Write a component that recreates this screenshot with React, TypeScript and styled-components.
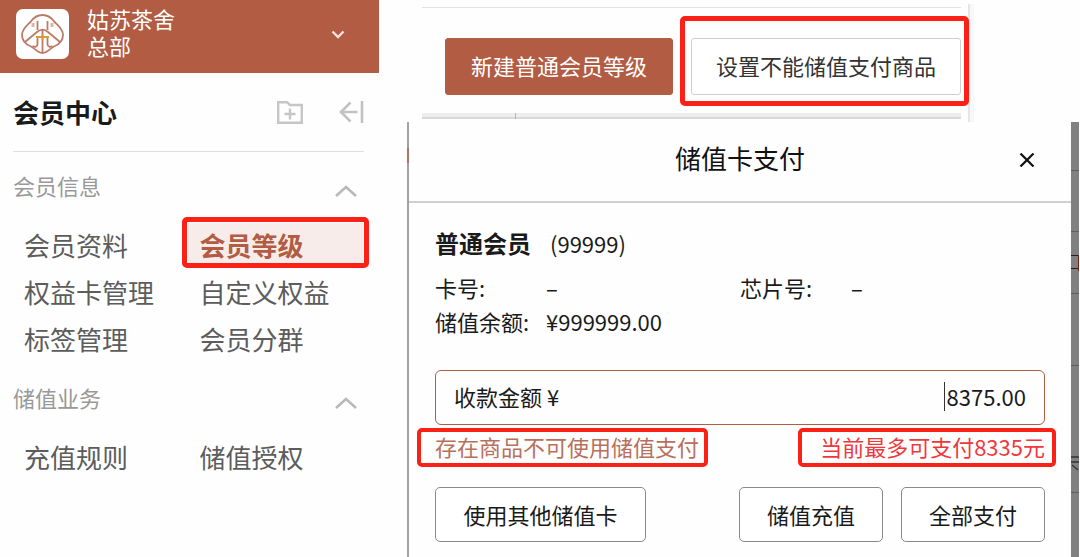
import React from "react";
import styled, { createGlobalStyle, css } from "styled-components";

const brand = "#b15c43";
const alertRed = "#fb2117";

const GlobalStyle = createGlobalStyle`
  *, *::before, *::after { box-sizing: border-box; }
  body {
    margin: 0;
    background: #fefefe;
    color: #1a1a1a;
    font-family: "Noto Sans CJK SC", sans-serif;
    font-size: 22px;
    line-height: 34px;
  }
  button, input { font: inherit; color: inherit; }
  button { padding: 0; border: 0; background: none; cursor: pointer; white-space: nowrap; }
  svg { display: block; flex: none; }
`;

const Page = styled.div`
  display: grid;
  grid-template-columns: minmax(300px, 379px) 1fr;
  min-height: 100vh;
`;

/* Red frame laid over a part to call attention to it */
const outline = css<{ $inset: string; $thick: number }>`
  position: relative;
  &::after {
    content: "";
    position: absolute;
    inset: ${(p) => p.$inset};
    border: ${(p) => p.$thick}px solid ${alertRed};
    border-radius: 5px;
    pointer-events: none;
  }
`;

const Marked = styled.div<{ $inset: string; $thick: number }>`
  ${outline}
`;

const Sidebar = styled.aside`
  display: flex;
  flex-direction: column;
`;

const StoreBar = styled.header`
  display: flex;
  align-items: center;
  gap: 18px;
  height: 73px;
  padding: 0 34px 5px 16px;
  background: ${brand};
  color: #fff;
`;

const Logo = styled.div`
  width: 53px;
  height: 50px;
  border-radius: 7px;
  background: #fff;
`;

const StoreName = styled.div`
  flex: 1;
  padding-bottom: 5px;
  line-height: 27px;

  span { display: block; }
`;

const IconButton = styled.button`
  display: flex;
  align-items: center;
  justify-content: center;
`;

const SidebarTitle = styled.div`
  display: flex;
  align-items: center;
  gap: 36px;
  height: 79px;
  margin: 0 15px 0 13px;
  border-bottom: 1px solid #dfdfdf;

  h1 {
    flex: 1;
    margin: 0;
    font-size: 26px;
    font-weight: 700;
  }
`;

const SectionHead = styled.button`
  display: flex;
  align-items: center;
  justify-content: space-between;
  width: 100%;
  height: 71px;
  padding: 0 22px 5px 13px;
  color: #999;

  svg { margin-top: 11px; }
`;

const Links = styled.nav`
  display: grid;
  grid-template-columns: 1fr 1fr;
  padding: 0 16px 0 12px;
`;

const activeLink = css`
  ${outline}
  color: ${brand};
  font-weight: 700;
  background: linear-gradient(#f7ecea, #f7ecea) no-repeat 0 0 / 100% 41px;
`;

const NavLink = styled.a<{ $active: boolean; $inset: string; $thick: number }>`
  height: 47px;
  padding-left: 12px;
  font-size: 26px;
  line-height: 44px;
  color: #5c5c5c;
  text-decoration: none;
  white-space: nowrap;
  ${(p) => p.$active && activeLink}
`;

const Main = styled.main`
  display: flex;
  flex-direction: column;
  min-width: 0;
`;

const Toolbar = styled.div`
  align-self: flex-start;
  margin: 4px 0 0 43px;
  padding: 3px 7px 0 0;
  height: 118px;
  border-right: 2px solid #e6e6e6;
  box-shadow: 4px 0 0 #f8f8f8;
`;

const ToolbarRow = styled.div`
  display: flex;
  gap: 18px;
  padding: 30px 0 18px 23px;
  border-top: 1px solid #e2e2e2;
`;

const ToolbarFoot = styled.div`
  height: 6px;
  padding-left: 93px;
  background: #ededed;
  border-bottom: 2px solid #d9d9d9;

  &::before {
    content: "";
    display: block;
    width: 1px;
    height: 6px;
    background: #b5b5b5;
  }
`;

const ToolButton = styled.button<{ $primary?: boolean }>`
  height: 57px;
  padding: 0 ${(p) => (p.$primary ? 25 : 24)}px 3px;
  border: 1px solid ${(p) => (p.$primary ? brand : "#cfcfcf")};
  border-radius: 3px;
  background: ${(p) => (p.$primary ? brand : "#fff")};
  color: ${(p) => (p.$primary ? "#fff" : "#333")};
`;

const Stage = styled.div`
  display: flex;
  flex: 1;
  padding: 0 1px 0 28px;
`;

const LeftEdge = styled.div`
  width: 2px;
  background: linear-gradient(#a3a3a3 26px, #b07560 26px 41px, #a3a3a3 41px);
`;

const RightEdge = styled.div`
  width: 8px;
  background: #808080;
`;

const Dialog = styled.section`
  flex: 1;
  min-width: 0;
`;

const DialogHead = styled.header`
  display: grid;
  grid-template-columns: 1fr auto 1fr;
  align-items: center;
  height: 81px;
  padding: 0 36px 4px;
  border-bottom: 2px solid #d0d0d0;

  h2 {
    grid-column: 2;
    margin: 0;
    padding-bottom: 3px;
    font-size: 26px;
    font-weight: 400;
    color: #111;
  }

  button { justify-self: end; }
`;

const DialogBody = styled.div`
  padding: 22px 26px 15px;
`;

const Member = styled.div`
  display: flex;
  align-items: center;
  gap: 19px;
  margin-bottom: 9px;
  line-height: 36px;

  strong { font-size: 24px; }
`;

const Facts = styled.dl`
  display: grid;
  grid-template-columns: 1fr 1fr;
  margin: 0 0 32px;
`;

const Fact = styled.div`
  display: flex;
  white-space: nowrap;

  dt { width: 111px; }
  dd { margin: 0; }
`;

const AmountField = styled.label`
  display: flex;
  align-items: center;
  justify-content: space-between;
  height: 55px;
  padding: 0 18px 3px;
  border: 1px solid ${brand};
  border-radius: 6px;
`;

const AmountEntry = styled.span`
  display: flex;
  align-items: center;

  &::before {
    content: "";
    width: 1px;
    height: 29px;
    background: #333;
  }

  input {
    width: 81px;
    padding: 0;
    border: 0;
    outline: 0;
    background: none;
    text-align: right;
  }
`;

const Hints = styled.div`
  display: flex;
  align-items: center;
  justify-content: space-between;
  height: 42px;
  margin-bottom: 20px;
  white-space: nowrap;
`;

const Hint = styled(Marked)<{ $color: string }>`
  color: ${(p) => p.$color};
`;

const Actions = styled.footer`
  display: flex;
  gap: 18px;
`;

const ActionButton = styled.button<{ $wide?: boolean }>`
  width: ${(p) => (p.$wide ? 211 : 144)}px;
  height: 55px;
  margin-right: ${(p) => (p.$wide ? "auto" : 0)};
  padding-bottom: 2px;
  border: 1px solid #8a8a8a;
  border-radius: 5px;
  background: #fff;
`;

function LogoMark() {
  return (
    <svg width="53" height="50" viewBox="0 0 53 50" fill="none" stroke="#bd7b67" strokeWidth="1.8">
      <path d="M26.500 6C21 6 17.500 8.500 14.500 13C10.500 17 6 20 6 26C6 32 10 35.500 15 37.500C19 39.500 22 44 26.500 44C31 44 34 39.500 38 37.500C43 35.500 47 32 47 26C47 20 42.500 17 38.500 13C35.500 8.500 32 6 26.500 6Z" />
      <path d="M9 33L21 23C24.500 20 28.500 20 32 23L44 33" />
      <path d="M21.500 12V21M31.500 12V21" />
      <path d="M17 14V18M36 14V18" stroke="#dcb5a8" strokeWidth="3" />
      <path d="M26.500 21V43" />
      <path d="M21.500 29V35C21.500 38 19 38.500 16.500 37M31.500 29V35C31.500 38 34 38.500 36.500 37" />
      <path d="M20 28H33M26.500 25V31" stroke="#d99a3c" />
    </svg>
  );
}

function ChevronUp() {
  return (
    <svg width="22" height="12" viewBox="0 0 22 12" fill="none" stroke="#b9b9b9" strokeWidth="2.600">
      <path d="M1 11L11 2L21 11" />
    </svg>
  );
}

/* Slices of the page behind the dialog that show past its right side */
function BackdropDetail() {
  return (
    <svg width="8" height="435" viewBox="0 0 8 435" fill="none" stroke="#5f5f5f">
      <path d="M0 48.500H8M0 109.500H8M0 171.500H8M0 243.500H8M0 370.500H8" />
      <path d="M0 133.500H7M0 146.500H7" stroke="#222" />
      <path d="M7.500 133V149" stroke="#7a1f14" />
      <path d="M0 335H8M0 340H8M1 343L7 348" stroke="#333" strokeWidth="1.500" />
    </svg>
  );
}

interface Entry {
  label: string;
  active?: boolean;
}

const sections: { title: string; entries: Entry[] }[] = [
  {
    title: "会员信息",
    entries: [
      { label: "会员资料" },
      { label: "会员等级", active: true },
      { label: "权益卡管理" },
      { label: "自定义权益" },
      { label: "标签管理" },
      { label: "会员分群" },
    ],
  },
  {
    title: "储值业务",
    entries: [{ label: "充值规则" }, { label: "储值授权" }],
  },
];

export default function App() {
  return (
    <>
      <GlobalStyle />
      <Page>
        <Sidebar>
          <StoreBar>
            <Logo>
              <LogoMark />
            </Logo>
            <StoreName>
              <span>姑苏茶舍</span>
              <span>总部</span>
            </StoreName>
            <IconButton aria-label="切换门店">
              <svg width="14" height="9" viewBox="0 0 14 9" fill="none" stroke="#f6e4de" strokeWidth="2.400">
                <path d="M1.500 1.500L7 7L12.500 1.500" />
              </svg>
            </IconButton>
          </StoreBar>
          <SidebarTitle>
            <h1>会员中心</h1>
            <IconButton aria-label="新建分组">
              <svg width="26" height="23" viewBox="0 0 26 23" fill="none" stroke="#c6c6c6" strokeWidth="2.400">
                <path d="M1.200 1.200H10L13 4H24.800V21.800H1.200Z" />
                <path d="M13 7.500V18.500M7.500 13H18.500" />
              </svg>
            </IconButton>
            <IconButton aria-label="收起">
              <svg width="25" height="22" viewBox="0 0 25 22" fill="none" stroke="#c2c2c2" strokeWidth="2.600">
                <path d="M11.500 1.500L2 11L11.500 20.500M2 11H18.500M23 0V22" />
              </svg>
            </IconButton>
          </SidebarTitle>
          {sections.map((section) => (
            <div key={section.title}>
              <SectionHead>
                {section.title}
                <ChevronUp />
              </SectionHead>
              <Links aria-label={section.title}>
                {section.entries.map((entry) => (
                  <NavLink
                    key={entry.label}
                    href="#"
                    $active={!!entry.active}
                    $inset="-6px -6px 2px"
                    $thick={5}
                  >
                    {entry.label}
                  </NavLink>
                ))}
              </Links>
            </div>
          ))}
        </Sidebar>

        <Main>
          <Toolbar>
            <ToolbarRow>
              <ToolButton $primary>新建普通会员等级</ToolButton>
              <Marked $inset="-22px -8px -11px -11px" $thick={5}>
                <ToolButton>设置不能储值支付商品</ToolButton>
              </Marked>
            </ToolbarRow>
            <ToolbarFoot />
          </Toolbar>

          <Stage>
            <LeftEdge />
            <Dialog aria-label="储值卡支付">
              <DialogHead>
                <h2>储值卡支付</h2>
                <IconButton aria-label="关闭">
                  <svg width="16" height="14" viewBox="0 0 16 14" fill="none" stroke="#111" strokeWidth="2.200">
                    <path d="M1.500 0.500L14.500 13.500M14.500 0.500L1.500 13.500" />
                  </svg>
                </IconButton>
              </DialogHead>
              <DialogBody>
                <Member>
                  <strong>普通会员</strong>
                  <span>(99999)</span>
                </Member>
                <Facts>
                  <Fact>
                    <dt>卡号:</dt>
                    <dd>–</dd>
                  </Fact>
                  <Fact>
                    <dt>芯片号:</dt>
                    <dd>–</dd>
                  </Fact>
                  <Fact>
                    <dt>储值余额:</dt>
                    <dd>¥999999.00</dd>
                  </Fact>
                </Facts>
                <AmountField>
                  收款金额 ¥
                  <AmountEntry>
                    <input type="text" inputMode="decimal" defaultValue="8375.00" />
                  </AmountEntry>
                </AmountField>
                <Hints>
                  <Hint $color="#b8705c" $inset="-1px -9px -4px -18px" $thick={4}>
                    存在商品不可使用储值支付
                  </Hint>
                  <Hint $color="#f0383c" $inset="-1px -11px -4px -22px" $thick={4}>
                    当前最多可支付8335元
                  </Hint>
                </Hints>
                <Actions>
                  <ActionButton $wide>使用其他储值卡</ActionButton>
                  <ActionButton>储值充值</ActionButton>
                  <ActionButton>全部支付</ActionButton>
                </Actions>
              </DialogBody>
            </Dialog>
            <RightEdge>
              <BackdropDetail />
            </RightEdge>
          </Stage>
        </Main>
      </Page>
    </>
  );
}
